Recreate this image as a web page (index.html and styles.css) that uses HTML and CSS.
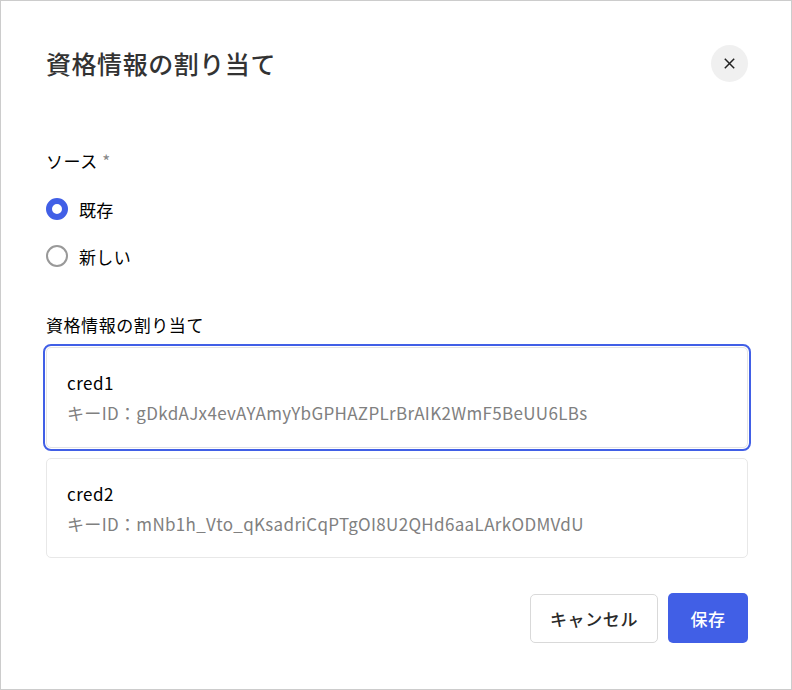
FILE: index.html
```html
<!DOCTYPE html>
<html lang="ja">
<head>
<meta charset="utf-8">
<title>資格情報の割り当て</title>
<link rel="stylesheet" href="styles.css">
</head>
<body>
<div class="dialog">
  <header class="head">
    <h1 class="title">資格情報の割り当て</h1>
    <button class="close" aria-label="close">
      <svg width="12" height="12" viewBox="0 0 12 12"><path d="M0.8 0.8L10.2 10.2M10.2 0.8L0.8 10.2" stroke="#222" stroke-width="1.5" fill="none"/></svg>
    </button>
  </header>
  <div class="label source-label">ソース <span class="star">*</span></div>
  <div class="radios">
    <div class="radio"><span class="dot on"></span><span>既存</span></div>
    <div class="radio"><span class="dot"></span><span>新しい</span></div>
  </div>
  <div class="label cred-label">資格情報の割り当て</div>
  <div class="cards">
    <div class="card selected">
      <div class="name">cred1</div>
      <div class="key">キーID：gDkdAJx4evAYAmyYbGPHAZPLrBrAIK2WmF5BeUU6LBs</div>
    </div>
    <div class="card">
      <div class="name">cred2</div>
      <div class="key">キーID：mNb1h_Vto_qKsadriCqPTgOI8U2QHd6aaLArkODMVdU</div>
    </div>
  </div>
  <footer class="actions">
    <button class="btn cancel">キャンセル</button>
    <button class="btn save">保存</button>
  </footer>
</div>
</body>
</html>
```
FILE: styles.css
```css
* { box-sizing: border-box; }
html, body { margin: 0; height: 100%; }
body { font-family: "Noto Sans CJK JP", "Noto Sans", sans-serif; color: #222; background: #fff; letter-spacing: 0.33px; }
.dialog { width: 792px; height: 690px; border: 1px solid #ccc; padding: 44px 43px 0 45px; background: #fff; }
.head { display: flex; justify-content: space-between; align-items: center; height: 37px; }
.title { margin: 0; font-size: 25px; font-weight: 500; line-height: 37px; letter-spacing: 0.55px; color: #333; }
.close { width: 37px; height: 37px; border: 0; border-radius: 50%; background: #f0f0f0; padding: 0; display: flex; align-items: center; justify-content: center; }
.label { font-size: 17px; font-weight: 400; line-height: 24px; letter-spacing: 0.55px; color: #000; }
.source-label { margin-top: 67px; }
.star { color: #888; }
.radios { display: flex; flex-direction: column; gap: 23px; margin-top: 24px; }
.radio { display: flex; align-items: center; gap: 11px; height: 24px; font-size: 17px; color: #000; }
.dot { width: 22px; height: 22px; border-radius: 50%; border: 2.5px solid #999; background: #fff; }
.dot.on { border: 6px solid #415fe6; }
.cred-label { margin-top: 45px; }
.cards { display: flex; flex-direction: column; gap: 10px; margin-top: 10px; }
.card { height: 100px; border: 1px solid #e8e8e8; border-radius: 5px; padding: 20px 20px 0; }
.card.selected { height: 101px; outline: 2px solid #415fe6; outline-offset: 1px; border-color: #e4e4e4; }
.name { font-size: 17px; line-height: 30px; letter-spacing: 0.5px; color: #000; }
.key { font-size: 17px; color: #808080; line-height: 30px; }
.actions { display: flex; justify-content: flex-end; align-items: flex-end; gap: 10px; margin-top: 35px; }
.btn { border-radius: 5px; font-family: inherit; font-size: 17px; font-weight: 500; padding: 0; letter-spacing: 0.6px; }
.cancel { width: 128px; height: 49px; background: #fff; border: 1px solid #d9d9d9; color: #2a2a2a; }
.save { width: 80px; height: 50px; background: #415fe6; border: 0; color: #fff; }
```
